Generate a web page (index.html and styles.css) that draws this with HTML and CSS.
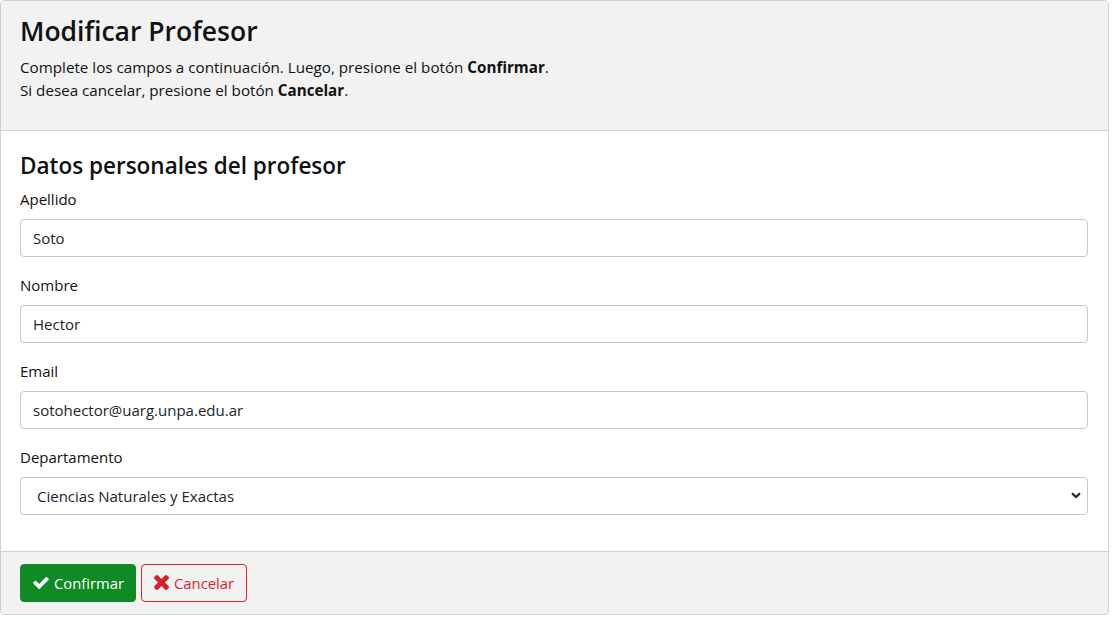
FILE: index.html
```html
<!DOCTYPE html>
<html lang="es">
<head>
<meta charset="utf-8">
<title>Modificar Profesor</title>
<link rel="stylesheet" href="styles.css">
</head>
<body>
<div class="card">
  <div class="card-header">
    <h2 class="title">Modificar Profesor</h2>
    <p class="intro">Complete los campos a continuación. Luego, presione el botón <strong>Confirmar</strong>.<br>Si desea cancelar, presione el botón <strong>Cancelar</strong>.</p>
  </div>
  <div class="card-body">
    <h4 class="section">Datos personales del profesor</h4>
    <div class="group">
      <label class="label" for="ape">Apellido</label>
      <input class="control" id="ape" type="text" value="Soto">
    </div>
    <div class="group">
      <label class="label" for="nom">Nombre</label>
      <input class="control" id="nom" type="text" value="Hector">
    </div>
    <div class="group">
      <label class="label" for="em">Email</label>
      <input class="control" id="em" type="email" value="sotohector@uarg.unpa.edu.ar">
    </div>
    <div class="group">
      <label class="label" for="dep">Departamento</label>
      <select class="control select" id="dep">
        <option>Ciencias Naturales y Exactas</option>
      </select>
    </div>
  </div>
  <div class="card-footer">
    <button class="btn btn-success" type="button">
      <svg class="icon" viewBox="121 334 1550 1188" width="16" height="12"><path fill="currentColor" d="M1671 566q0 40-28 68l-724 724-136 136q-28 28-68 28t-68-28l-136-136-362-362q-28-28-28-68t28-68l136-136q28-28 68-28t68 28l294 295 656-657q28-28 68-28t68 28l136 136q28 28 28 68z"/></svg>
      <span>Confirmar</span>
    </button>
    <button class="btn btn-outline-danger" type="button">
      <svg class="icon" viewBox="110 366 1188 1188" width="15" height="15"><path fill="currentColor" d="M1298 1322q0 40-28 68l-136 136q-28 28-68 28t-68-28l-294-294-294 294q-28 28-68 28t-68-28l-136-136q-28-28-28-68t28-68l294-294-294-294q-28-28-28-68t28-68l136-136q28-28 68-28t68 28l294 294 294-294q28-28 68-28t68 28l136 136q28 28 28 68t-28 68l-294 294 294 294q28 28 28 68z"/></svg>
      <span>Cancelar</span>
    </button>
  </div>
</div>
</body>
</html>
```
FILE: styles.css
```css
* { box-sizing: border-box; }
html, body { margin: 0; padding: 0; background: #fff; }
body {
  font-family: "Open Sans", "Noto Sans", sans-serif;
  font-size: 16px;
  line-height: 24px;
  color: #212529;
}
.card {
  width: 1109px;
  border: 1px solid #d0d0d0;
  border-radius: 4px;
  overflow: hidden;
}
.card-header {
  background: #f2f2f2;
  border-bottom: 1px solid #d0d0d0;
  padding: 11px 20px 28px 19px;
}
.title {
  margin: 0 0 6px;
  font-size: 26.5px;
  line-height: 38px;
  font-weight: 600;
  color: #111;
}
.intro {
  margin: 0;
  font-size: 15.2px;
  line-height: 23px;
  color: #111;
}
.intro strong { font-weight: 700; }
.card-body {
  padding: 21px 20px 20px 19px;
}
.section {
  margin: 0 0 6px;
  font-size: 22.5px;
  line-height: 28.8px;
  font-weight: 600;
  color: #111;
}
.group {
  display: flex;
  flex-direction: column;
  margin-bottom: 16px;
}
.label {
  font-size: 15px;
  line-height: 24px;
  margin-bottom: 8px;
  color: #111;
}
.control {
  display: block;
  width: 100%;
  height: 38px;
  padding: 6px 12px;
  font-family: inherit;
  font-size: 15px;
  line-height: 24px;
  color: #212529;
  background: #fff;
  border: 1px solid #c4c8cd;
  border-radius: 4px;
  outline: none;
}
.select {
  appearance: none;
  -webkit-appearance: none;
  padding-left: 16px;
  font-size: 15px;
  background-image: url("data:image/svg+xml,%3Csvg xmlns='http://www.w3.org/2000/svg' viewBox='0 0 10 7'%3E%3Cpath d='M1 1.2l4 3.8 4-3.8' fill='none' stroke='%23222' stroke-width='2.2'/%3E%3C/svg%3E");
  background-repeat: no-repeat;
  background-position: right 6px center;
  background-size: 10px 7px;
}
.card-footer {
  background: #f2f2f2;
  border-top: 1px solid #d0d0d0;
  padding: 12px 20px 12px 19px;
  display: flex;
  gap: 5px;
}
.btn {
  display: inline-flex;
  align-items: center;
  gap: 5px;
  height: 38px;
  padding: 6px 11px 6px 12px;
  font-family: inherit;
  font-size: 14.8px;
  line-height: 24px;
  border-radius: 4px;
  border: 1px solid transparent;
  cursor: pointer;
}
.btn-success {
  background: #0f8a24;
  border-color: #0f8a24;
  color: #fff;
}
.btn-outline-danger {
  padding-right: 12px;
  background: transparent;
  border-color: #d81f2e;
  color: #d81f2e;
}
.icon { display: block; }
```
